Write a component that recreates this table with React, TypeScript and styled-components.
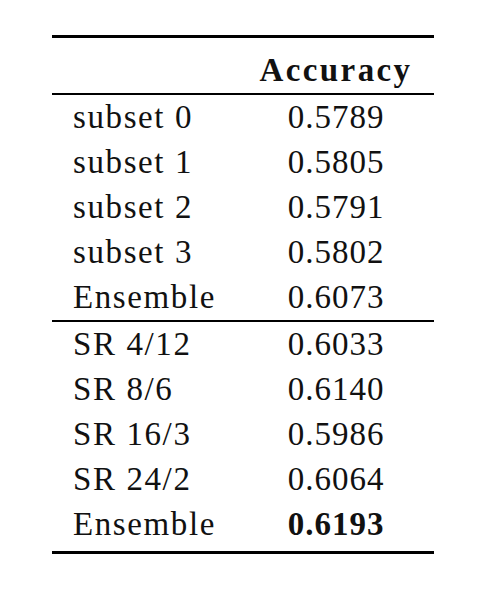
import React from "react";
import styled, { createGlobalStyle } from "styled-components";

const Global = createGlobalStyle`
  html, body { margin: 0; padding: 0; background: #ffffff; }
  body { font-family: "Liberation Serif", "DejaVu Serif", serif; color: #111111; }
`;

const Page = styled.div`
  width: 480px;
  height: 590px;
  padding: 35px 0 0 52px;
  box-sizing: border-box;
`;

const Table = styled.div`
  width: 382px;
  display: flex;
  flex-direction: column;
`;

const Rule = styled.div<{ $w: number; $gap?: number }>`
  height: ${(p) => p.$w}px;
  margin-top: ${(p) => p.$gap ?? 0}px;
  background: #000000;
`;

const Row = styled.div<{ $head?: boolean }>`
  display: grid;
  grid-template-columns: 186px 1fr;
  height: 45px;
  line-height: 45px;
  font-size: 33px;
  letter-spacing: 1px;
  padding-top: ${(p) => (p.$head ? "10px" : "0")};
`;

const Label = styled.div`
  padding-left: 21px;
  letter-spacing: 1.6px;
  white-space: nowrap;
`;

const Value = styled.div<{ $bold?: boolean; $head?: boolean }>`
  text-align: center;
  font-weight: ${(p) => (p.$bold ? 700 : 400)};
  letter-spacing: ${(p) => (p.$head ? "2.4px" : "1px")};
  white-space: nowrap;
`;

const group1 = [
  ["subset 0", "0.5789"],
  ["subset 1", "0.5805"],
  ["subset 2", "0.5791"],
  ["subset 3", "0.5802"],
  ["Ensemble", "0.6073"],
];

const group2 = [
  ["SR 4/12", "0.6033"],
  ["SR 8/6", "0.6140"],
  ["SR 16/3", "0.5986"],
  ["SR 24/2", "0.6064"],
  ["Ensemble", "0.6193"],
];

export default function App() {
  return (
    <>
      <Global />
      <Page>
        <Table>
          <Rule $w={3} />
          <Row $head>
            <Label />
            <Value $bold $head>Accuracy</Value>
          </Row>
          <Rule $w={2} />
          {group1.map(([l, v]) => (
            <Row key={l + v}>
              <Label>{l}</Label>
              <Value>{v}</Value>
            </Row>
          ))}
          <Rule $w={2} />
          {group2.map(([l, v], i) => (
            <Row key={l + v}>
              <Label>{l}</Label>
              <Value $bold={i === group2.length - 1}>{v}</Value>
            </Row>
          ))}
          <Rule $w={3} $gap={4} />
        </Table>
      </Page>
    </>
  );
}
